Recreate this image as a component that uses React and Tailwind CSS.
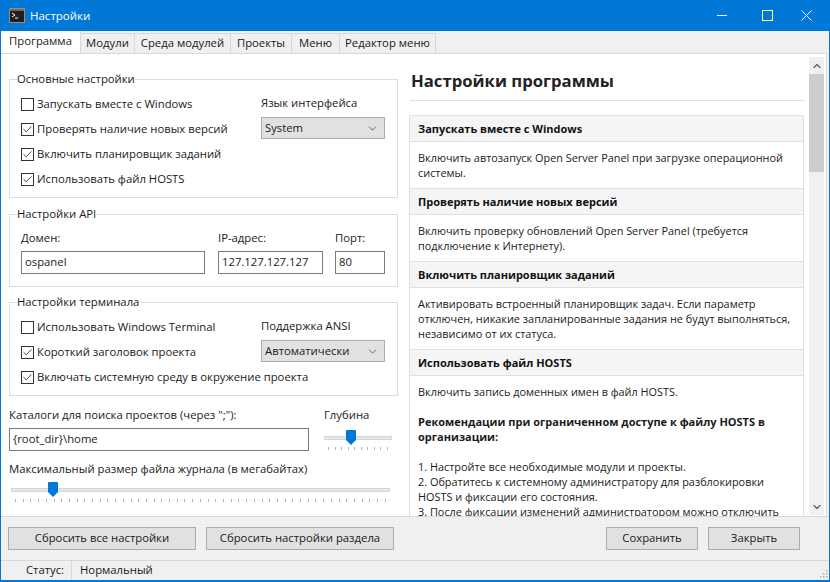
import { ChevronDown, ChevronUp, Check } from 'lucide-react'

const TABS = [
  ['Модули', 'w-[54px]'],
  ['Среда модулей', 'w-[96px]'],
  ['Проекты', 'w-[61px]'],
  ['Меню', 'w-[48px]'],
  ['Редактор меню', 'w-[96px]'],
]

function TerminalIcon() {
  return (
    <svg width="16" height="15" viewBox="0 0 16 15" className="shrink-0">
      <rect x="0.5" y="0.5" width="15" height="14" fill="#1f1f1f" stroke="#a08a70" />
      <rect x="1" y="1" width="14" height="2" fill="#6b6b6b" />
      <path d="M3 5l3 2-3 2" fill="none" stroke="#fff" strokeWidth="1" />
      <path d="M6 10h3" stroke="#fff" strokeWidth="1" />
    </svg>
  )
}

function WindowControls() {
  return (
    <svg width="95" height="12" viewBox="0 0 95 12" className="ml-auto mr-[18px] text-white" fill="none" stroke="currentColor" strokeWidth="1">
      <path d="M0 5.500h10" />
      <rect x="45.500" y="0.500" width="10" height="10" />
      <path d="M84.500 0.500l10 10M94.500 0.500l-10 10" />
    </svg>
  )
}

function Group({ title, className, children }) {
  return (
    <fieldset className={`border border-[#dcdcdc] px-[11px] ${className}`}>
      <legend className="-ml-[4px] text-[#1a1a1a] leading-[16px]">{title}</legend>
      {children}
    </fieldset>
  )
}

function CheckRow({ checked, label }) {
  return (
    <div className="flex items-center h-[25px]">
      <span className="w-[13px] h-[13px] border border-[#333] flex items-center justify-center mr-[3px] bg-white shrink-0">
        {checked && <Check size={11} strokeWidth={1.8} className="text-[#222]" />}
      </span>
      <span className="whitespace-nowrap">{label}</span>
    </div>
  )
}

function Select({ label, value }) {
  return (
    <div className="w-[124px] pt-[8px] shrink-0">
      <div className="h-[16px] leading-[16px] mb-[6px] whitespace-nowrap">{label}</div>
      <div className="h-[22px] bg-[#e1e1e1] border border-[#adadad] flex items-center justify-between pl-[3px] pr-[5px]">
        <span>{value}</span>
        <ChevronDown size={13} strokeWidth={1.4} className="text-[#444]" />
      </div>
    </div>
  )
}

function Field({ label, value, className }) {
  return (
    <div className={className}>
      <div className="h-[16px] leading-[16px] mb-[5px]">{label}</div>
      <div className="h-[23px] border border-[#7a7a7a] bg-white flex items-center pl-[3px]">{value}</div>
    </div>
  )
}

function Slider({ ticks, thumbLeft, className }) {
  return (
    <div className={className}>
      <div className="relative h-[15px] flex items-center">
        <div className="w-full h-[4px] bg-[#e7e7e7] border border-[#d6d6d6]" />
        <svg width="10" height="15" viewBox="0 0 10 15" className="absolute top-0" style={{ left: thumbLeft }}>
          <path d="M1 0h8a1 1 0 0 1 1 1v9l-5 5-5-5V1a1 1 0 0 1 1-1z" fill="#0078d7" />
        </svg>
      </div>
      <div className="flex justify-between px-[4px] mt-[2px]">
        {Array.from({ length: ticks }).map((_, i) => (
          <span key={i} className="w-px h-[3px] bg-[#b5b5b5]" />
        ))}
      </div>
    </div>
  )
}

function Info({ title, children }) {
  return (
    <>
      <div className="h-[26px] bg-[#f5f5f5] border-b border-[#e0e0e0] flex items-center pl-[8px] pt-[2px] font-bold text-[11px] text-[#111]">{title}</div>
      <div className="pl-[8px] pr-[2px] py-[8px] leading-[15px] text-[10.9px] border-b border-[#e0e0e0] text-[#1a1a1a]">{children}</div>
    </>
  )
}

function Btn({ className, children }) {
  return <button className={`h-[23px] bg-[#e1e1e1] border border-[#adadad] ${className}`}>{children}</button>
}

export default function App() {
  return (
    <div className="w-[830px] h-[582px] flex flex-col bg-[#f0f0f0] border-x border-b-2 border-[#0078d7] text-[11.3px] text-[#1a1a1a] overflow-hidden" style={{ fontFamily: '"Open Sans", "Noto Sans", sans-serif' }}>
      {/* Title bar */}
      <div className="h-[31px] bg-[#0078d7] -mx-px flex items-center pl-[9px] text-white shrink-0">
        <TerminalIcon />
        <span className="ml-[5px] text-[11.5px]">Настройки</span>
        <WindowControls />
      </div>

      {/* Tabs */}
      <div className="h-[22px] flex items-end shrink-0">
        <div className="w-[80px] h-[22px] bg-white border-r border-[#d9d9d9] flex items-center justify-center pb-[2px]">Программа</div>
        {TABS.map(([t, w]) => (
          <div key={t} className={`${w} h-[20px] border-t border-r border-[#d9d9d9] flex items-center justify-center whitespace-nowrap`}>{t}</div>
        ))}
      </div>

      {/* Panel */}
      <div className="h-[463px] mr-[2px] bg-white border-t border-r border-[#d9d9d9] flex overflow-hidden shrink-0">
        <div className="w-[399px] shrink-0 pl-[8px] pt-[17px]">
          <Group title="Основные настройки" className="w-[389px] h-[127px]">
            <div className="flex pt-[5px]">
              <div className="w-[240px]">
                <CheckRow label="Запускать вместе с Windows" />
                <CheckRow checked label="Проверять наличие новых версий" />
                <CheckRow checked label="Включить планировщик заданий" />
                <CheckRow checked label="Использовать файл HOSTS" />
              </div>
              <div className="-mt-[5px]"><Select label="Язык интерфейса" value="System" /></div>
            </div>
          </Group>

          <Group title="Настройки API" className="w-[389px] h-[81px] mt-[8px]">
            <div className="flex pt-[8px]">
              <Field className="w-[184px]" label="Домен:" value="ospanel" />
              <Field className="w-[105px] ml-[13px]" label="IP-адрес:" value="127.127.127.127" />
              <Field className="w-[50px] ml-[12px]" label="Порт:" value="80" />
            </div>
          </Group>

          <Group title="Настройки терминала" className="w-[389px] h-[102px] mt-[7px]">
            <div className="flex pt-[5px]">
              <div className="w-[240px]">
                <CheckRow label="Использовать Windows Terminal" />
                <CheckRow checked label="Короткий заголовок проекта" />
                <CheckRow checked label="Включать системную среду в окружение проекта" />
              </div>
              <div className="-mt-[5px]"><Select label="Поддержка ANSI" value="Автоматически" /></div>
            </div>
          </Group>

          <div className="flex w-[389px] mt-[11px]">
            <Field className="w-[300px]" label={'Каталоги для поиска проектов (через ";"):'} value={'{root_dir}\\home'} />
            <div className="ml-[15px] w-[68px]">
              <div className="h-[16px] leading-[16px] mb-[7px]">Глубина</div>
              <Slider ticks={10} thumbLeft={22} />
            </div>
          </div>

          <div className="w-[389px] mt-[10px]">
            <div className="h-[16px] leading-[16px] mb-[5px]">Максимальный размер файла журнала (в мегабайтах)</div>
            <Slider ticks={49} thumbLeft={37} className="ml-[2px] w-[379px]" />
          </div>
        </div>

        {/* Help pane */}
        <div className="flex-1 min-w-0 overflow-hidden pt-[15px]">
          <h1 className="text-[16.7px] font-bold text-[#222] leading-[24px] ml-[11px] pb-[7px]">Настройки программы</h1>
          <div className="h-px bg-[#e0e0e0] ml-[10px] mr-[4px]" />
          <div className="ml-[9px] mr-[5px] mt-[14px] border border-b-0 border-[#e0e0e0]">
            <Info title="Запускать вместе с Windows">Включить автозапуск Open Server Panel при загрузке операционной системы.</Info>
            <Info title="Проверять наличие новых версий">Включить проверку обновлений Open Server Panel (требуется подключение к Интернету).</Info>
            <Info title="Включить планировщик заданий">Активировать встроенный планировщик задач. Если параметр отключен, никакие запланированные задания не будут выполняться, независимо от их статуса.</Info>
            <Info title="Использовать файл HOSTS">
              <p>Включить запись доменных имен в файл HOSTS.</p>
              <p className="font-bold text-[11px] mt-[15px]">Рекомендации при ограниченном доступе к файлу HOSTS в организации:</p>
              <p className="mt-[15px]">1. Настройте все необходимые модули и проекты.</p>
              <p>2. Обратитесь к системному администратору для разблокировки HOSTS и фиксации его состояния.</p>
              <p>3. После фиксации изменений администратором можно отключить</p>
            </Info>
          </div>
        </div>
        <div className="w-[15px] mt-[3px] mb-[1px] mr-[2px] bg-[#f0f0f0] flex flex-col items-center justify-between shrink-0">
          <div className="w-full">
            <div className="h-[17px] flex items-center justify-center"><ChevronUp size={12} strokeWidth={2.5} className="text-[#606060]" /></div>
            <div className="h-[98px] bg-[#cdcdcd]" />
          </div>
          <div className="h-[17px] flex items-center justify-center"><ChevronDown size={12} strokeWidth={2.5} className="text-[#606060]" /></div>
        </div>
      </div>

      {/* Buttons */}
      <div className="h-[44px] flex items-center pl-[7px] border-t border-[#d9d9d9] shrink-0">
        <Btn className="w-[188px]">Сбросить все настройки</Btn>
        <Btn className="w-[188px] ml-[10px]">Сбросить настройки раздела</Btn>
        <Btn className="w-[92px] ml-[212px]">Сохранить</Btn>
        <Btn className="w-[92px] ml-[10px]">Закрыть</Btn>
      </div>

      {/* Status bar */}
      <div className="flex-1 border-t border-[#d9d9d9] flex items-center">
        <span className="w-[71px] pl-[25px] border-r border-[#d9d9d9] h-full flex items-center">Статус:</span>
        <span className="pl-[8px]">Нормальный</span>
        <svg width="8" height="8" viewBox="0 0 8 8" className="ml-auto self-end mb-[2px] mr-px" fill="#b0b0b0">
          <rect x="6" y="0" width="1.500" height="1.500" />
          <rect x="3" y="3" width="1.500" height="1.500" />
          <rect x="6" y="3" width="1.500" height="1.500" />
          <rect x="0" y="6" width="1.500" height="1.500" />
          <rect x="3" y="6" width="1.500" height="1.500" />
          <rect x="6" y="6" width="1.500" height="1.500" />
        </svg>
      </div>
    </div>
  )
}
